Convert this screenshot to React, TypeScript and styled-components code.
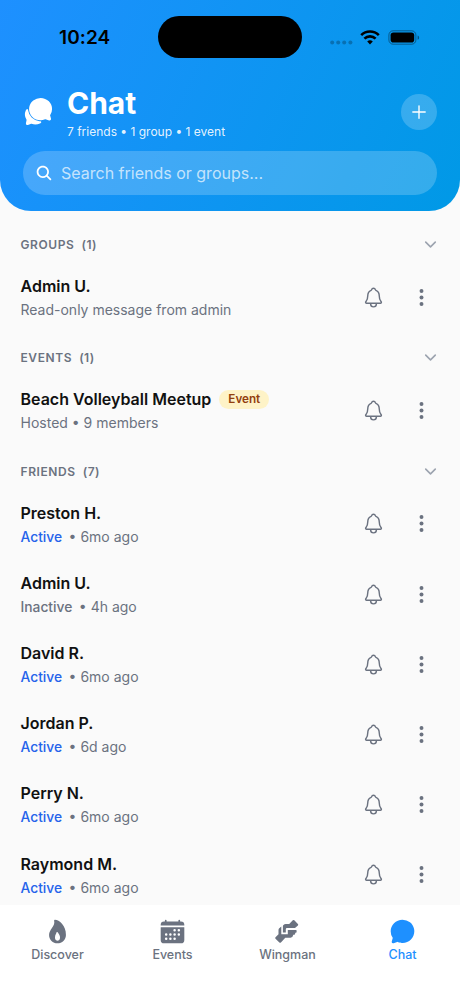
import React from 'react';
import styled, { createGlobalStyle } from 'styled-components';
import {
  IoAdd,
  IoCalendar,
  IoChatbubble,
  IoChatbubbles,
  IoChevronDown,
  IoEllipsisVertical,
  IoFlame,
  IoNotificationsOutline,
  IoSearch,
} from 'react-icons/io5';

const GlobalStyle = createGlobalStyle`
  * { box-sizing: border-box; }
  body {
    margin: 0;
    font-family: Inter, "Liberation Sans", sans-serif;
    background: #fafafa;
  }
  button { font: inherit; color: inherit; border: 0; padding: 0; background: none; }
  svg { display: block; flex-shrink: 0; }
`;

const Screen = styled.div`
  width: 460px;
  height: 1000px;
  display: flex;
  flex-direction: column;
  overflow: hidden;
  background: #fafafa;
`;

const Header = styled.header`
  height: 210.5px;
  flex-shrink: 0;
  border-radius: 0 0 31px 31px;
  background: linear-gradient(114.5deg, #1e90ff 0%, #0099e6 100%);
  color: #fff;
`;

const StatusBar = styled.div`
  height: 74px;
  display: grid;
  grid-template-columns: 158px 144px 158px;
  align-items: center;
  color: #000;
`;

const Clock = styled.div`
  padding: 1px 0 0 59px;
  font-size: 19px;
  font-weight: 600;
  letter-spacing: 0.1px;
`;

const Island = styled.div`
  height: 42px;
  border-radius: 21px;
  background: #000;
`;

const Indicators = styled.div`
  display: flex;
  align-items: center;
  padding-left: 27px;
`;

const TitleRow = styled.div`
  height: 77.4px;
  display: flex;
  align-items: center;
  padding: 0 23px 0 23.5px;
`;

const TitleIcon = styled(IoChatbubbles)`
  margin: 0 0.5px 2px -0.5px;
`;

const Titles = styled.div`
  flex: 1;
  padding-left: 12.5px;
`;

const Title = styled.h1`
  margin: 0;
  font-size: 30px;
  line-height: 36px;
  font-weight: 700;
`;

const Summary = styled.div`
  margin-top: 2px;
  font-size: 12px;
  line-height: 18px;
  color: rgba(255, 255, 255, 0.9);
`;

const AddButton = styled.button`
  width: 36px;
  height: 36px;
  margin-bottom: 1px;
  border-radius: 50%;
  display: grid;
  place-items: center;
  background: rgba(255, 255, 255, 0.2);
`;

const SearchBar = styled.div`
  height: 44px;
  margin: 0 23px;
  padding-left: 12px;
  border-radius: 22px;
  display: flex;
  align-items: center;
  gap: 8px;
  background: rgba(255, 255, 255, 0.2);
  font-size: 16px;
`;

const Placeholder = styled.span`
  color: rgba(255, 255, 255, 0.7);
`;

const List = styled.main`
  flex: 1;
  min-height: 0;
  overflow: hidden;
  padding-top: 8.2px;
`;

const SectionHead = styled.div`
  height: 43.3px;
  padding: 8.4px 21px 0 20.5px;
  display: flex;
  align-items: center;
  justify-content: space-between;
  color: #6b7280;
  font-size: 12px;
  font-weight: 600;
  letter-spacing: 0.6px;
`;

const Count = styled.span`
  margin-left: 7px;
  letter-spacing: 0.4px;
`;

const Row = styled.div`
  height: 70.15px;
  padding: 0 28px 0 20.5px;
  display: flex;
  align-items: center;
  color: #6b7280;
`;

const RowText = styled.div`
  flex: 1;
  padding-top: 1px;
`;

const NameLine = styled.div`
  display: flex;
  align-items: center;
  gap: 8px;
  height: 22px;
`;

const Name = styled.span`
  font-size: 16px;
  font-weight: 600;
  color: #111;
`;

const Tag = styled.span`
  height: 19px;
  padding: 0 9px;
  border-radius: 10px;
  display: flex;
  align-items: center;
  background: #fef3c7;
  color: #92400e;
  font-size: 11.7px;
  font-weight: 600;
`;

const Detail = styled.div`
  margin-top: 2px;
  height: 21px;
  line-height: 21px;
  font-size: 14px;
`;

const Status = styled.span<{ $active: boolean }>`
  margin-right: 6.5px;
  font-weight: 500;
  font-size: 13.8px;
  color: ${(p) => (p.$active ? '#2563eb' : '#6b7280')};
`;

const RowActions = styled.div`
  display: flex;
  align-items: center;
  gap: 26px;
`;

const TabBar = styled.nav`
  height: 95px;
  flex-shrink: 0;
  display: grid;
  grid-template-columns: repeat(4, 1fr);
  background: #fff;
`;

const Tab = styled.button<{ $current?: boolean }>`
  display: flex;
  flex-direction: column;
  align-items: center;
  padding-top: 13px;
  gap: 1px;
  font-size: 12.5px;
  line-height: 18px;
  font-weight: 500;
  color: ${(p) => (p.$current ? '#1e90ff' : '#6b7280')};
`;

interface Friend {
  name: string;
  active: boolean;
  seen: string;
}

const friends: Friend[] = [
  { name: 'Preston H.', active: true, seen: '6mo ago' },
  { name: 'Admin U.', active: false, seen: '4h ago' },
  { name: 'David R.', active: true, seen: '6mo ago' },
  { name: 'Jordan P.', active: true, seen: '6d ago' },
  { name: 'Perry N.', active: true, seen: '6mo ago' },
  { name: 'Raymond M.', active: true, seen: '6mo ago' },
];

function Section({ label, count }: { label: string; count: number }) {
  return (
    <SectionHead>
      <div>
        {label}
        <Count>({count})</Count>
      </div>
      <IoChevronDown size={17} color="#9ca3af" />
    </SectionHead>
  );
}

function ChatRow({ name, tag, children }: { name: string; tag?: string; children: React.ReactNode }) {
  return (
    <Row>
      <RowText>
        <NameLine>
          <Name>{name}</Name>
          {tag && <Tag>{tag}</Tag>}
        </NameLine>
        <Detail>{children}</Detail>
      </RowText>
      <RowActions>
        <IoNotificationsOutline size={23} />
        <IoEllipsisVertical size={21} />
      </RowActions>
    </Row>
  );
}

function StatusIcons() {
  return (
    <Indicators>
      <svg width="92" height="20" viewBox="0 0 92 20">
        <g fill="#000" fillOpacity="0.25">
          <circle cx="3.2" cy="15.6" r="2" />
          <circle cx="9.2" cy="15.6" r="2" />
          <circle cx="15.2" cy="15.6" r="2" />
          <circle cx="21.4" cy="15.6" r="2" />
        </g>
        <g fill="none" stroke="#000" strokeWidth="2.6">
          <path d="M32.2 8.2a12.3 12.3 0 0 1 17.6 0" />
          <path d="M35.4 11.7a7.8 7.8 0 0 1 11.2 0" />
        </g>
        <path d="M41 17.6l-2.8-3a4 4 0 0 1 5.6 0z" />
        <rect x="59.9" y="3.8" width="27" height="13.4" rx="4.2" fill="none" stroke="#000" strokeOpacity="0.4" />
        <rect x="61.6" y="5.5" width="23.6" height="10" rx="2.8" />
        <path d="M88.6 8.6v4.2c1-.5 1.5-1.2 1.5-2.1s-.5-1.7-1.5-2.1z" fillOpacity="0.45" />
      </svg>
    </Indicators>
  );
}

/* Two clasped hands reaching in from opposite corners. */
function WingmanIcon() {
  return (
    <svg width="27" height="27" viewBox="0 0 27 27" fill="currentColor">
      <path d="M18.8 2.3a1.1 1.1 0 0 1 1.5 0l3.6 3.6a1.1 1.1 0 0 1 0 1.5L21 10H13q-1.200 0-1.200 1.200v3.400h-2.900V8.400q0-.8.6-1.300l1-.8q.5-.4 1.200-.4h3.500z" />
      <path d="M7.300 8.500v7.700h6.500V12h8.200q.6 0 .6.600v1.300q0 .8-.8.8h-.6v.8q0 1.300-1.200 1.300h-.7q-.3 2.500-2.800 3h-5.200l-4.400 4.600a1.100 1.100 0 0 1-1.500 0L1.500 20.700a1.100 1.100 0 0 1 0-1.500l3-3v-4.300q0-.8.5-1.400z" />
    </svg>
  );
}

export default function App() {
  return (
    <Screen>
      <GlobalStyle />
      <Header>
        <StatusBar>
          <Clock>10:24</Clock>
          <Island />
          <StatusIcons />
        </StatusBar>
        <TitleRow>
          <TitleIcon size={31} />
          <Titles>
            <Title>Chat</Title>
            <Summary>7 friends • 1 group • 1 event</Summary>
          </Titles>
          <AddButton>
            <IoAdd size={22} />
          </AddButton>
        </TitleRow>
        <SearchBar>
          <IoSearch size={18} />
          <Placeholder>Search friends or groups...</Placeholder>
        </SearchBar>
      </Header>
      <List>
        <Section label="GROUPS" count={1} />
        <ChatRow name="Admin U.">Read-only message from admin</ChatRow>
        <Section label="EVENTS" count={1} />
        <ChatRow name="Beach Volleyball Meetup" tag="Event">Hosted • 9 members</ChatRow>
        <Section label="FRIENDS" count={7} />
        {friends.map((f) => (
          <ChatRow key={f.name} name={f.name}>
            <Status $active={f.active}>{f.active ? 'Active' : 'Inactive'}</Status>• {f.seen}
          </ChatRow>
        ))}
      </List>
      <TabBar>
        <Tab>
          <IoFlame size={27} />
          Discover
        </Tab>
        <Tab>
          <IoCalendar size={27} />
          Events
        </Tab>
        <Tab>
          <WingmanIcon />
          Wingman
        </Tab>
        <Tab $current>
          <IoChatbubble size={27} />
          Chat
        </Tab>
      </TabBar>
    </Screen>
  );
}
